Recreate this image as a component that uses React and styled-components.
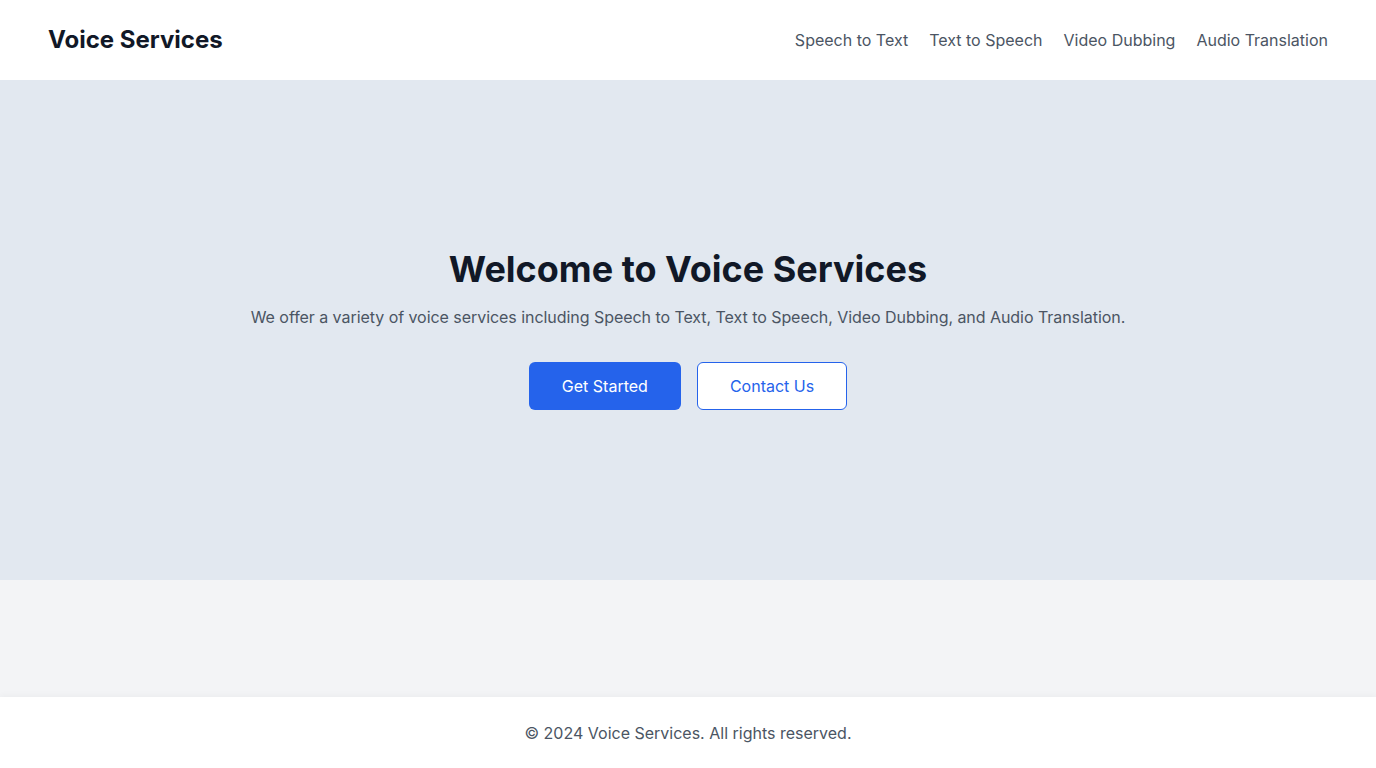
import React from 'react';
import styled, { createGlobalStyle } from 'styled-components';

const GlobalStyle = createGlobalStyle`
  * { box-sizing: border-box; }
  html, body, #root { margin: 0; height: 100%; }
  body {
    font-family: Inter, "Noto Sans", "Liberation Sans", sans-serif;
    background: #f3f4f6;
    color: #111827;
  }
`;

const Page = styled.div`
  min-height: 100vh;
  display: flex;
  flex-direction: column;
  background: #f3f4f6;
`;

const Header = styled.header`
  height: 80px;
  background: #ffffff;
  display: flex;
  align-items: center;
  justify-content: space-between;
  padding: 0 48px;
`;

const Logo = styled.div`
  font-size: 24px;
  line-height: 32px;
  font-weight: 700;
  color: #111827;
`;

const Nav = styled.nav`
  display: flex;
  gap: 21px;
`;

const NavLink = styled.a`
  font-size: 16px;
  line-height: 24px;
  color: #4b5563;
  text-decoration: none;
  cursor: pointer;
  &:hover { color: #111827; }
`;

const Main = styled.main`
  flex: 1;
`;

const Hero = styled.section`
  height: 500px;
  padding-bottom: 2px;
  background: #e2e8f0;
  display: flex;
  flex-direction: column;
  align-items: center;
  justify-content: center;
  text-align: center;
`;

const Title = styled.h1`
  margin: 0 0 16px;
  font-size: 36px;
  line-height: 40px;
  font-weight: 700;
  color: #111827;
`;

const Lead = styled.p`
  margin: 0 0 32px;
  font-size: 16px;
  line-height: 24px;
  letter-spacing: -0.05px;
  color: #4b5563;
`;

const Actions = styled.div`
  display: flex;
  gap: 16px;
  margin-top: 1px;
`;

const Button = styled.a`
  display: inline-flex;
  align-items: center;
  justify-content: center;
  height: 48px;
  padding: 0 32px;
  border-radius: 6px;
  font-size: 16px;
  text-decoration: none;
  cursor: pointer;
  border: 1px solid ${p => (p.$outline ? '#2563eb' : 'transparent')};
  background: ${p => (p.$outline ? '#ffffff' : '#2563eb')};
  color: ${p => (p.$outline ? '#2563eb' : '#ffffff')};
`;

const Footer = styled.footer`
  height: 71px;
  background: #ffffff;
  display: flex;
  align-items: center;
  justify-content: center;
  font-size: 16px;
  color: #4b5563;
  box-shadow: 0 -2px 6px rgba(0, 0, 0, 0.03);
`;

const links = ['Speech to Text', 'Text to Speech', 'Video Dubbing', 'Audio Translation'];

export default function App() {
  return (
    <>
      <GlobalStyle />
      <Page>
        <Header>
          <Logo>Voice Services</Logo>
          <Nav>
            {links.map(l => (
              <NavLink key={l}>{l}</NavLink>
            ))}
          </Nav>
        </Header>
        <Main>
          <Hero>
            <Title>Welcome to Voice Services</Title>
            <Lead>
              We offer a variety of voice services including Speech to Text, Text to Speech, Video Dubbing, and Audio Translation.
            </Lead>
            <Actions>
              <Button>Get Started</Button>
              <Button $outline>Contact Us</Button>
            </Actions>
          </Hero>
        </Main>
        <Footer>© 2024 Voice Services. All rights reserved.</Footer>
      </Page>
    </>
  );
}
